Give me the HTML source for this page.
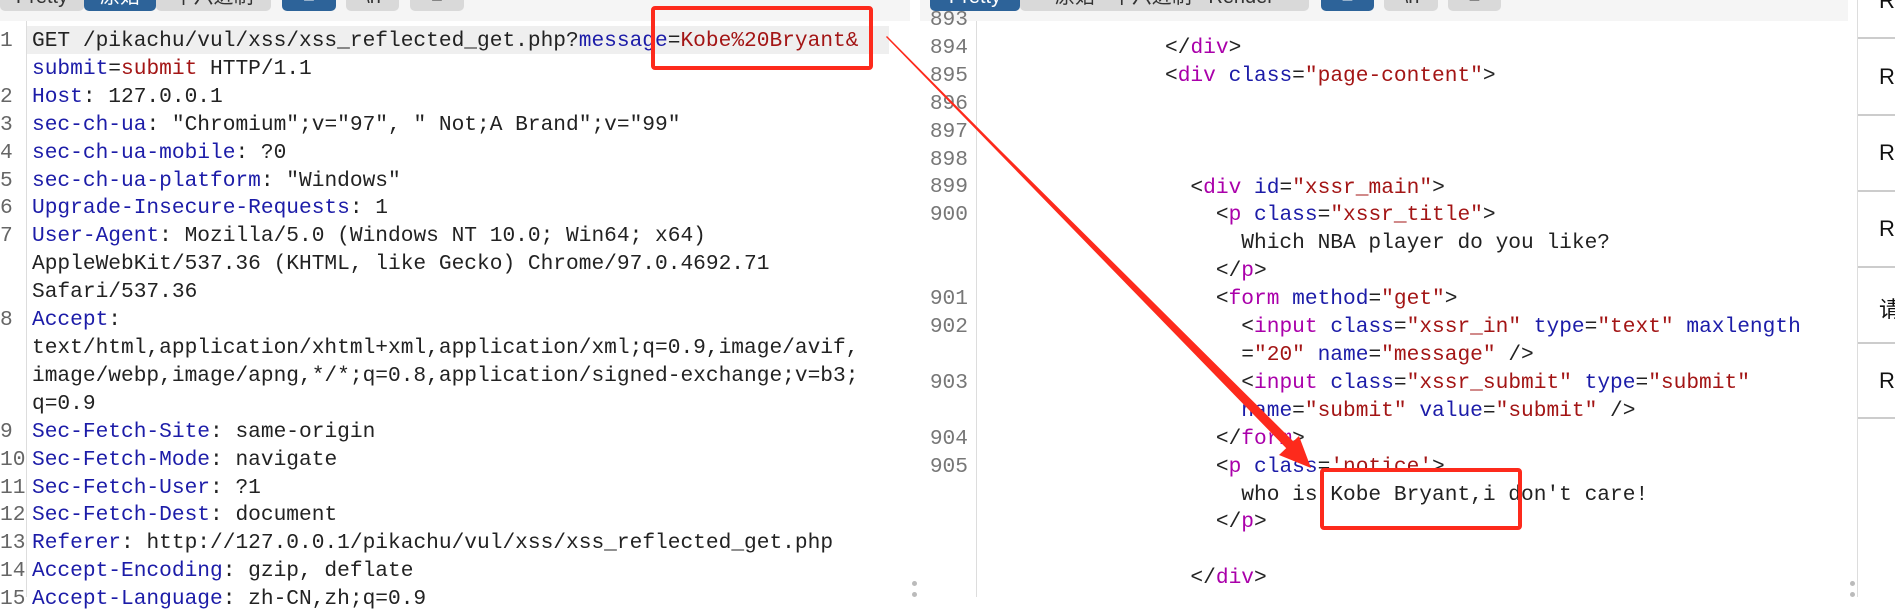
<!DOCTYPE html>
<html><head><meta charset="utf-8"><style>
body{margin:0;width:1895px;height:597px;overflow:hidden;background:#fff;position:relative;font-family:"Liberation Mono",monospace;}
.l{position:absolute;font-size:21.2px;line-height:27.9px;white-space:pre;color:#222;}
.n{position:absolute;font-size:21.2px;line-height:27.9px;white-space:pre;color:#777;text-align:right;}
.k{color:#1c1ca8}.v{color:#a31515}.t{color:#a0a}.a{color:#1c1ca8}
.btn{position:absolute;top:-12px;height:23px;border-radius:0 0 5px 5px;font-family:"Liberation Sans","Noto Sans CJK SC",sans-serif;font-size:20px;line-height:18px;text-align:center;overflow:hidden}
.b{background:#2d6399;color:#fff}.g{background:#d9d9d9;color:#333}
.R{position:absolute;left:1879px;font-family:"Liberation Sans","Noto Sans CJK SC",sans-serif;font-size:22px;color:#111}
.sep{position:absolute;left:1858px;width:37px;height:2px;background:#ccc}
.dot{position:absolute;width:5px;height:5px;border-radius:3px;background:#bbb}
</style></head><body>
<div style="position:absolute;left:0;top:0;width:910px;height:21px;background:#f5f5f5"></div>
<div style="position:absolute;left:920px;top:0;width:928px;height:21px;background:#f5f5f5"></div>
<div class="btn g" style="left:0;width:84px">Pretty</div>
<div class="btn b" style="left:84px;width:72px">原始</div>
<div class="btn g" style="left:156px;width:115px">十六进制</div>
<div class="btn b" style="left:282px;width:54px">≡</div>
<div class="btn g" style="left:346px;width:53px">\n</div>
<div class="btn g" style="left:410px;width:54px">≡</div>
<div class="btn b" style="left:930px;width:90px">Pretty</div>
<div class="btn g" style="left:1020px;width:289px">原始 &nbsp; 十六进制 &nbsp; Render</div>
<div class="btn b" style="left:1321px;width:53px">≡</div>
<div class="btn g" style="left:1384px;width:54px">\n</div>
<div class="btn g" style="left:1448px;width:53px">≡</div>

<div style="position:absolute;left:26px;top:21px;width:1px;height:576px;background:#ddd"></div>
<div style="position:absolute;left:27px;top:26px;width:862px;height:28px;background:#efefef"></div>
<div style="position:absolute;left:976px;top:21px;width:1px;height:576px;background:#ddd"></div>
<div style="position:absolute;left:1857px;top:0;width:1px;height:597px;background:#ddd"></div>

<div class="n" style="left:0;top:28px;width:20px;text-align:left;color:#666">1

2
3
4
5
6
7


8



9
10
11
12
13
14
15</div>
<div class="l" style="left:32px;top:28px">GET /pikachu/vul/xss/xss_reflected_get.php?<span class="k">message</span>=<span class="v">Kobe%20Bryant&amp;</span>
<span class="k">submit</span>=<span class="v">submit</span> HTTP/1.1
<span class="k">Host</span>: 127.0.0.1
<span class="k">sec-ch-ua</span>: "Chromium";v="97", " Not;A Brand";v="99"
<span class="k">sec-ch-ua-mobile</span>: ?0
<span class="k">sec-ch-ua-platform</span>: "Windows"
<span class="k">Upgrade-Insecure-Requests</span>: 1
<span class="k">User-Agent</span>: Mozilla/5.0 (Windows NT 10.0; Win64; x64)
AppleWebKit/537.36 (KHTML, like Gecko) Chrome/97.0.4692.71
Safari/537.36
<span class="k">Accept</span>:
text/html,application/xhtml+xml,application/xml;q=0.9,image/avif,
image/webp,image/apng,*/*;q=0.8,application/signed-exchange;v=b3;
q=0.9
<span class="k">Sec-Fetch-Site</span>: same-origin
<span class="k">Sec-Fetch-Mode</span>: navigate
<span class="k">Sec-Fetch-User</span>: ?1
<span class="k">Sec-Fetch-Dest</span>: document
<span class="k">Referer</span>: http://127.0.0.1/pikachu/vul/xss/xss_reflected_get.php
<span class="k">Accept-Encoding</span>: gzip, deflate
<span class="k">Accept-Language</span>: zh-CN,zh;q=0.9</div>

<div class="n" style="left:925px;top:7px;width:43px">893
894
895
896
897
898
899
900


901
902

903

904
905</div>
<div class="l" style="left:987px;top:35px">              &lt;/<span class="t">div</span>&gt;
              &lt;<span class="t">div</span> <span class="a">class</span>=<span class="v">"page-content"</span>&gt;



                &lt;<span class="t">div</span> <span class="a">id</span>=<span class="v">"xssr_main"</span>&gt;
                  &lt;<span class="t">p</span> <span class="a">class</span>=<span class="v">"xssr_title"</span>&gt;
                    Which NBA player do you like?
                  &lt;/<span class="t">p</span>&gt;
                  &lt;<span class="t">form</span> <span class="a">method</span>=<span class="v">"get"</span>&gt;
                    &lt;<span class="t">input</span> <span class="a">class</span>=<span class="v">"xssr_in"</span> <span class="a">type</span>=<span class="v">"text"</span> <span class="a">maxlength</span>
                    =<span class="v">"20"</span> <span class="a">name</span>=<span class="v">"message"</span> /&gt;
                    &lt;<span class="t">input</span> <span class="a">class</span>=<span class="v">"xssr_submit"</span> <span class="a">type</span>=<span class="v">"submit"</span>
                    <span class="a">name</span>=<span class="v">"submit"</span> <span class="a">value</span>=<span class="v">"submit"</span> /&gt;
                  &lt;/<span class="t">form</span>&gt;
                  &lt;<span class="t">p</span> <span class="a">class</span>=<span class="v">'notice'</span>&gt;
                    who is Kobe Bryant,i don't care!
                  &lt;/<span class="t">p</span>&gt;

                &lt;/<span class="t">div</span>&gt;</div>

<div class="sep" style="top:37px"></div><div class="sep" style="top:114px"></div><div class="sep" style="top:190px"></div><div class="sep" style="top:266px"></div><div class="sep" style="top:342px"></div><div class="sep" style="top:417px"></div>
<div class="R" style="top:-12px">R</div><div class="R" style="top:64px">R</div><div class="R" style="top:140px">R</div><div class="R" style="top:216px">R</div><div class="R" style="top:292px">请</div><div class="R" style="top:368px">R</div>

<div class="dot" style="left:912px;top:581px"></div><div class="dot" style="left:912px;top:592px"></div>
<div class="dot" style="left:1850px;top:581px"></div><div class="dot" style="left:1850px;top:592px"></div>

<div style="position:absolute;left:651px;top:6px;width:214px;height:56px;border:4px solid #fd2a1c;border-radius:4px"></div>
<div style="position:absolute;left:1320px;top:468px;width:194px;height:54px;border:4px solid #fd2a1c;border-radius:4px"></div>
<svg style="position:absolute;left:0;top:0" width="1895" height="597">
<polygon points="886,37 887,36 1000,150 1294,442 1287,449 998,152" fill="#fd2a1c"/>
<polygon points="1311,468 1299,436 1279,455" fill="#fd2a1c"/>
</svg>
</body></html>
